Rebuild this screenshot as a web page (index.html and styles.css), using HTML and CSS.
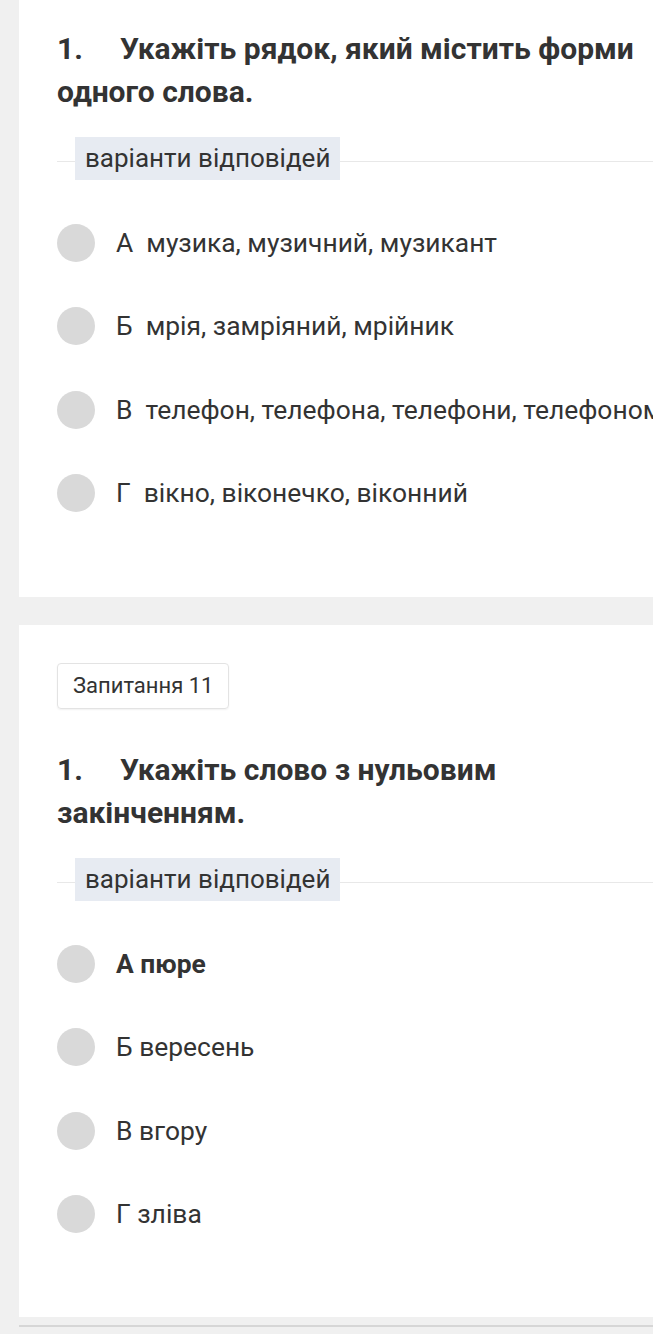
FILE: index.html
```html
<!DOCTYPE html>
<html lang="uk">
<head>
<meta charset="utf-8">
<link rel="stylesheet" href="styles.css">
</head>
<body>
<main class="page">
  <section class="card card-first">
    <h2 class="question"><span class="num">1.</span><span class="qtext">Укажіть рядок, який містить форми одного слова.</span></h2>
    <div class="divider"><span class="label">варіанти відповідей</span></div>
    <ul class="options">
      <li class="option"><span class="radio"></span><span class="text">А&nbsp; музика, музичний, музикант</span></li>
      <li class="option"><span class="radio"></span><span class="text">Б&nbsp; мрія, замріяний, мрійник</span></li>
      <li class="option"><span class="radio"></span><span class="text">В&nbsp; телефон, телефона, телефони, телефоном</span></li>
      <li class="option"><span class="radio"></span><span class="text">Г&nbsp; вікно, віконечко, віконний</span></li>
    </ul>
  </section>
  <section class="card card-second">
    <div class="badge">Запитання 11</div>
    <h2 class="question"><span class="num">1.</span><span class="qtext">Укажіть слово з нульовим закінченням.</span></h2>
    <div class="divider"><span class="label">варіанти відповідей</span></div>
    <ul class="options">
      <li class="option"><span class="radio"></span><span class="text bold">А пюре</span></li>
      <li class="option"><span class="radio"></span><span class="text">Б вересень</span></li>
      <li class="option"><span class="radio"></span><span class="text">В вгору</span></li>
      <li class="option"><span class="radio"></span><span class="text">Г зліва</span></li>
    </ul>
  </section>
  <div class="footer-line"></div>
</main>
</body>
</html>
```

FILE: styles.css
```css
* { box-sizing: border-box; }
html, body {
  margin: 0;
  padding: 0;
  background: #f0f0f0;
  height: 1334px;
  overflow: hidden;
}
body {
  font-family: Roboto, "Noto Sans", sans-serif;
  color: #333333;
}
.page {
  padding-left: 19px;
  display: flex;
  flex-direction: column;
}
.card {
  background: #ffffff;
  padding-left: 38px;
  overflow: hidden;
}
.card-first {
  padding-top: 27px;
  padding-bottom: 62px;
}
.card-second {
  margin-top: 28px;
  padding-top: 38px;
  padding-bottom: 61px;
}
.badge {
  align-self: flex-start;
  display: inline-block;
  height: 46px;
  line-height: 44px;
  padding: 0 15px;
  font-size: 22px;
  color: #333;
  border: 1px solid #e3e3e3;
  border-radius: 4px;
  box-shadow: 0 1px 2px rgba(0,0,0,0.06);
  margin-bottom: 39px;
}
.question {
  margin: 0;
  font-size: 30px;
  line-height: 43px;
  font-weight: 700;
  color: #333;
  padding-right: 8px;
}
.num {
  float: left;
  width: 63px;
}
.divider {
  margin-top: 24px;
  display: flex;
  align-items: center;
  position: relative;
  height: 43px;
}
.divider::before {
  content: "";
  position: absolute;
  left: 0;
  right: 0;
  top: 24px;
  height: 1px;
  background: #e8e8e8;
}
.label {
  position: relative;
  margin-left: 18px;
  height: 43px;
  line-height: 43px;
  padding: 0 10px;
  background: #e7ebf2;
  font-size: 26px;
  color: #333;
}
.options {
  list-style: none;
  margin: 21px 0 0;
  padding: 0;
}
.option {
  height: 83.5px;
  display: flex;
  align-items: center;
  white-space: nowrap;
}
.radio {
  flex: none;
  width: 38px;
  height: 38px;
  border-radius: 50%;
  background: #d9d9d9;
}
.text {
  margin-left: 21px;
  font-size: 26.4px;
  color: #333;
}
.text.bold { font-weight: 700; }
.footer-line {
  margin-top: 8px;
  height: 2px;
  background: #d6d6d6;
}
```
